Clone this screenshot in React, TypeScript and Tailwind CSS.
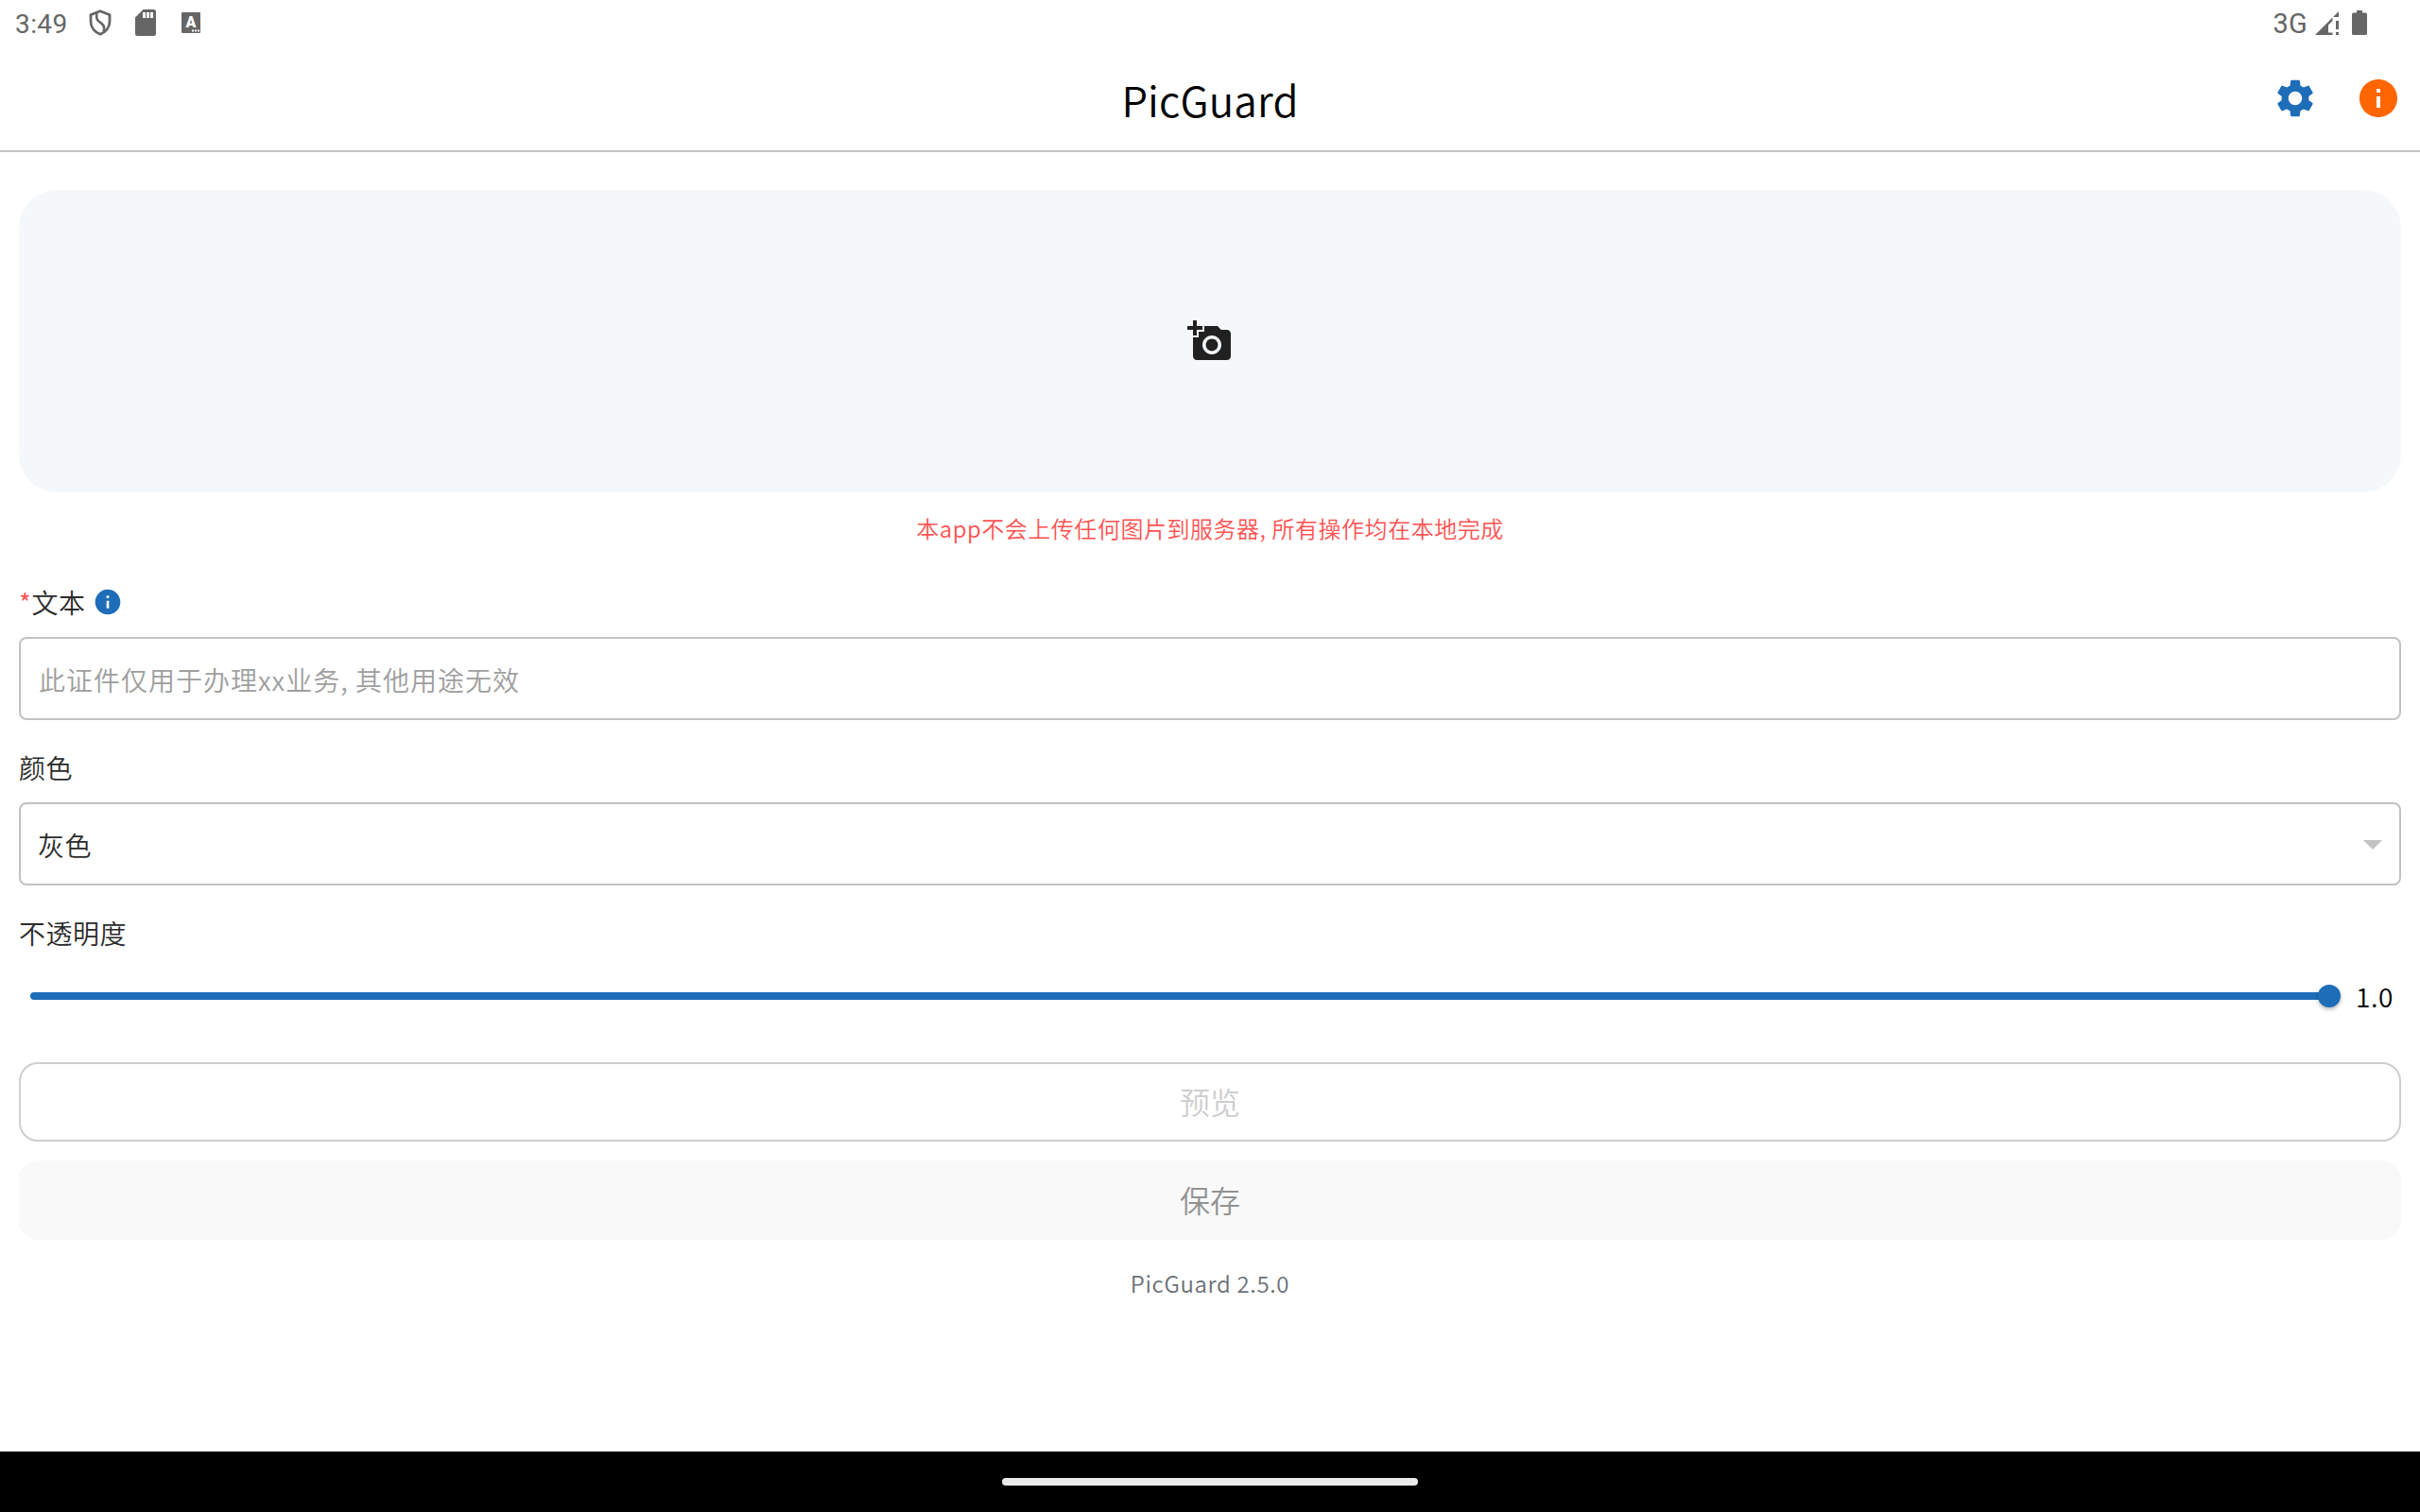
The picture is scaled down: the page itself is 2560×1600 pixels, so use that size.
import type { ReactNode } from "react";
import { MdAddAPhoto, MdArrowDropDown, MdInfo } from "react-icons/md";

function StatusBar() {
  return (
    <div className="flex h-12 items-center justify-between pl-4 pr-14 font-[Roboto,sans-serif] text-[#666666]">
      <div className="flex h-12 items-center">
        <span className="w-[78px] pt-[3px] text-[28px] font-normal leading-[48px] tracking-[0.4px]">3:49</span>
        <svg className="h-7 w-6" viewBox="0 0 24 28" fill="none" stroke="currentColor" strokeWidth="2.8">
          <path d="M12 1.8 22 5.6V13c0 5.600-4 10.800-10 13.300C6 23.800 2 18.600 2 13V5.600z" />
          <path d="M8.200 3.800v4.400c0 5.400 8 6 8 11.200 0 1.500-.3 2.700-.8 3.700" strokeWidth="2.600" />
        </svg>
        <svg className="ml-[25px] h-7 w-[22px]" viewBox="0 0 22 28" fill="currentColor">
          <path
            fillRule="evenodd"
            d="M8.500 0H19.500A2.500 2.500 0 0 1 22 2.500v23a2.500 2.500 0 0 1-2.500 2.500h-17A2.500 2.500 0 0 1 0 25.500v-17zM8 3v6h3V3zm4 0v6h3V3zm4 0v6h3V3z"
          />
        </svg>
        <svg className="ml-[27px] h-[22px] w-5" viewBox="0 0 20 22">
          <rect width="20" height="22" rx="1" fill="currentColor" />
          <text x="10" y="16" textAnchor="middle" className="fill-white font-[Roboto,sans-serif] text-[16px] font-black">
            A
          </text>
          <path d="M11 19.500h2m1 0h2m1 0h2" stroke="white" strokeWidth="2" />
        </svg>
      </div>
      <div className="flex h-12 items-center">
        <span className="pt-0.5 text-[29px] font-[450] leading-[48px] tracking-[0.2px]">3G</span>
        <svg className="ml-2 h-[25px] w-[25px]" viewBox="0 0 25 25" fill="currentColor">
          <path d="M0 25 18.500 6.500V10L14 14.500V22.500h4.500V25zM19.500 5.500 25 0v6h-5.500zM22 10h3v9h-3zM22 22h3v3h-3z" />
        </svg>
        <svg className="ml-[14px] h-[26px] w-4" viewBox="0 0 16 26" fill="currentColor">
          <path d="M5 0h6v2.500h3.500A1.500 1.500 0 0 1 16 4v20.500a1.500 1.500 0 0 1-1.500 1.500h-13A1.500 1.500 0 0 1 0 24.500V4a1.500 1.500 0 0 1 1.500-1.500H5z" />
        </svg>
      </div>
    </div>
  );
}

function SettingsIcon() {
  return (
    <svg className="size-12 text-[#1e6db8]" viewBox="0 0 24 24" fill="currentColor">
      <path d="M19.140 12.940c.04-.3.06-.61.06-.94 0-.32-.02-.64-.07-.94l2.030-1.580c.18-.14.23-.41.12-.61l-1.920-3.320c-.12-.22-.37-.29-.59-.22l-2.390.96c-.5-.38-1.030-.7-1.620-.94l-.36-2.540c-.04-.24-.24-.41-.48-.41h-3.840c-.24 0-.43.17-.47.41l-.36 2.540c-.59.24-1.130.57-1.620.94l-2.390-.96c-.22-.08-.47 0-.59.22L2.740 8.870c-.12.21-.08.47.12.61l2.030 1.580c-.05.3-.09.63-.09.94s.02.64.07.94l-2.030 1.580c-.18.14-.23.41-.12.61l1.920 3.320c.12.22.37.29.59.22l2.390-.96c.5.38 1.030.7 1.620.94l.36 2.540c.05.24.24.41.48.41h3.840c.24 0 .44-.17.47-.41l.36-2.540c.59-.24 1.130-.56 1.620-.94l2.390.96c.22.08.47 0 .59-.22l1.920-3.320c.12-.22.07-.47-.12-.61l-2.010-1.580zM12 15.600c-1.980 0-3.600-1.620-3.600-3.600s1.620-3.600 3.600-3.600 3.600 1.620 3.600 3.600-1.620 3.600-3.600 3.600z" />
    </svg>
  );
}

function Header() {
  return (
    <header className="grid h-[113px] grid-cols-[1fr_auto_1fr] border-b-2 border-[#c2c2c2]">
      <h1 className="col-start-2 pt-px text-[44px] font-[360] leading-[112px] tracking-[0.15px] text-black">
        PicGuard
      </h1>
      <div className="flex h-28 items-center justify-end gap-10 pr-5">
        <SettingsIcon />
        <MdInfo className="size-12 text-[#ff6500]" />
      </div>
    </header>
  );
}

function Label({ children }: { children: ReactNode }) {
  return (
    <div className="flex h-10 items-center text-[28px] leading-10 tracking-[0.5px] text-[#2b2b2b]">{children}</div>
  );
}

export default function App() {
  return (
    <div className="flex h-[1600px] w-[2560px] flex-col overflow-hidden bg-white font-['Noto_Sans_CJK_SC','Noto_Sans',sans-serif] font-[340]">
      <StatusBar />
      <Header />
      <main className="flex flex-1 flex-col px-5 pt-10">
        <button className="flex h-80 items-center justify-center rounded-[40px] bg-[#f4f8fb] text-[#212121]">
          <MdAddAPhoto className="size-12" />
        </button>
        <p className="mt-[18px] h-10 text-center text-2xl leading-10 tracking-[0.53px] text-[#ff5252]">
          本app不会上传任何图片到服务器, 所有操作均在本地完成
        </p>

        <div className="mt-[38px]">
          <Label>
            <span className="text-[#ff5252]">*</span>
            文本
            <MdInfo className="ml-2 size-8 text-[#1e6db8]" />
          </Label>
        </div>
        <div className="mt-[17px] flex h-[88px] items-center rounded-lg border-2 border-[#c2c2c2] px-[19px] pt-0.5 text-[28px] tracking-[1px] text-[#9e9e9e]">
          此证件仅用于办理xx业务, 其他用途无效
        </div>

        <div className="mt-[30px]">
          <Label>颜色</Label>
        </div>
        <div className="mt-[17px] flex h-[88px] items-center justify-between rounded-lg border-2 border-[#c2c2c2] pl-[18px] pr-1 text-[28px] tracking-[0.5px] text-[#2b2b2b]">
          <span className="pt-px">灰色</span>
          <MdArrowDropDown className="size-12 text-[#c2c2c2]" />
        </div>

        <div className="mt-[30px]">
          <Label>不透明度</Label>
        </div>
        <div className="mt-[27px] flex h-10 items-center pl-3">
          <div className="h-2 flex-1 rounded-l-full bg-[#1e6db8]" />
          <div className="-ml-1 size-6 rounded-full bg-[#1e6db8] shadow-[0_2px_4px_rgba(0,0,0,0.3)]" />
          <span className="w-16 pl-4 text-[28px] leading-10 tracking-[0.6px] text-black">1.0</span>
        </div>

        <button className="mt-[50px] h-[84px] rounded-[20px] border-2 border-[#cecece] pb-[3px] text-[32px] leading-none text-[#cecece]">
          预览
        </button>
        <button className="mt-5 h-[84px] rounded-[20px] bg-[#f9f9f9] pb-0.5 text-[32px] leading-none text-[#929292]">
          保存
        </button>
        <p className="mt-[26px] h-10 text-center text-2xl leading-10 tracking-[0.65px] text-[#6b7078]">
          PicGuard 2.5.0
        </p>
      </main>
      <div className="flex h-16 items-center justify-center bg-black">
        <div className="h-2 w-[440px] rounded-full bg-[#ebebeb]" />
      </div>
    </div>
  );
}
